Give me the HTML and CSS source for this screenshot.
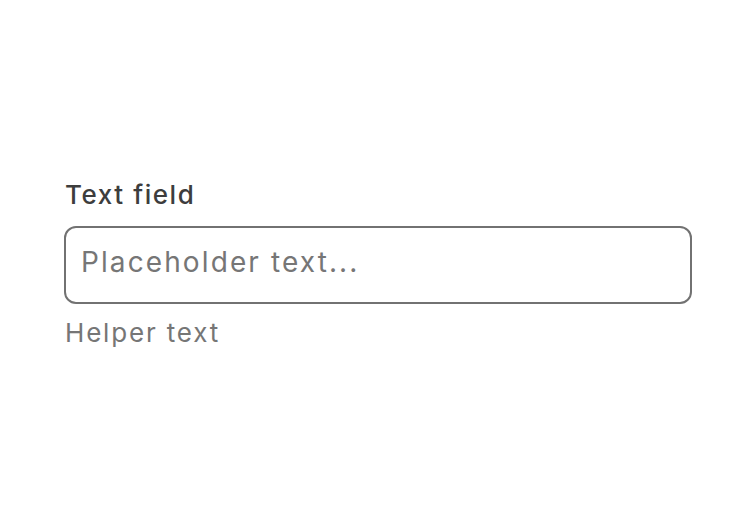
FILE: index.html
```html
<!DOCTYPE html>
<html lang="en">
<head>
    <meta charset="UTF-8">
    <meta name="viewport" content="width=device-width, initial-scale=1.0">
    <title>Text field</title>
    <link rel="stylesheet" href="styles.css">
</head>
<body>

<div class="page">
    <div class="field">
        <label class="field-label" for="textField">Text field</label>
        <input type="text" id="textField" class="field-input" placeholder="Placeholder text..." />
        <span class="field-helper">Helper text</span>
    </div>
</div>

</body>
</html>
```

FILE: styles.css
```css
body {
    margin: 0;
    font-family: 'Inter', 'Noto Sans', sans-serif;
    background-color: #ffffff;
}

.page {
    height: 528px;
    display: flex;
    align-items: center;
    padding: 0 64px;
    box-sizing: border-box;
}

.field {
    display: flex;
    flex-direction: column;
    width: 100%;
}

.field-label {
    font-size: 26px;
    line-height: 28px;
    font-weight: 500;
    letter-spacing: 0.06em;
    color: #3d3d3d;
    margin-bottom: 17px;
    padding-left: 1px;
}

.field-input {
    height: 78px;
    box-sizing: border-box;
    border: 2px solid #727272;
    border-radius: 12px;
    padding: 0 15px 6px;
    font-family: inherit;
    font-size: 28px;
    letter-spacing: 0.075em;
    color: #3d3d3d;
    outline: none;
}

.field-input::placeholder {
    color: #767676;
}

.field-helper {
    margin-top: 15px;
    font-size: 26px;
    line-height: 28px;
    letter-spacing: 0.07em;
    color: #767676;
    padding-left: 1px;
}
```
